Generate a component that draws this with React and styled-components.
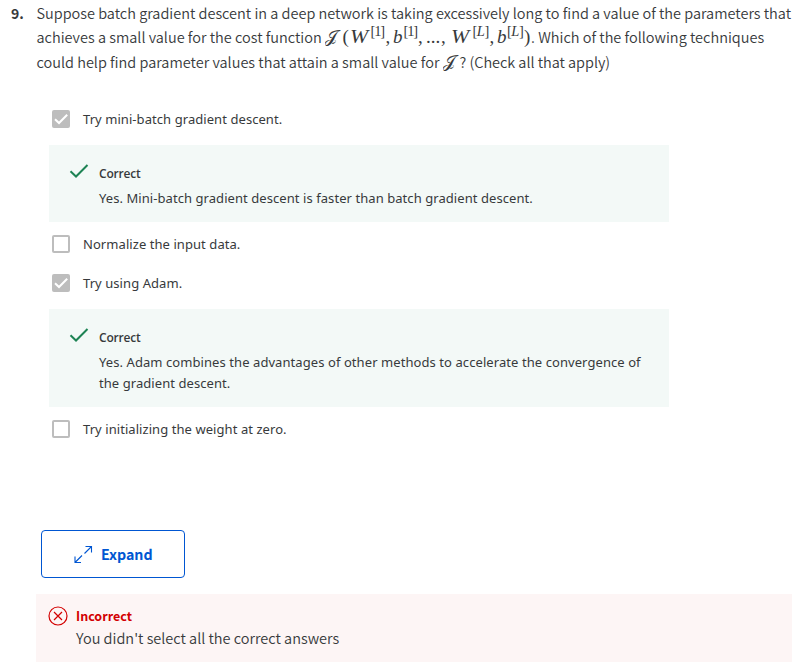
import React from 'react';
import styled, { createGlobalStyle } from 'styled-components';

const source = '"Noto Sans CJK SC", "Noto Sans", sans-serif';
const body = '"Noto Sans", "Open Sans", sans-serif';

const GlobalStyle = createGlobalStyle`
  * { box-sizing: border-box; }
  body { margin: 0; background: #fff; color: #373a3c; }
  p, ul { margin: 0; padding: 0; }
`;

const Page = styled.main`
  width: 799px;
  height: 666px;
  overflow: hidden;
  display: flex;
  flex-direction: column;
`;
const Question = styled.section`
  display: flex;
  padding: 1px 0 0 11px;
  height: 101px;
  font: 350 14.5px/24px ${source};
`;
const Number = styled.span`
  width: 25.5px;
  font-weight: 700;
  font-size: 14px;
`;
const Line = styled.p`
  display: flex;
  height: ${(p) => p.$h || 24}px;
  white-space: pre;
`;
const Words = styled.span`
  width: ${(p) => p.$w}px;
  letter-spacing: ${(p) => p.$ls || 0}px;
`;
const Formula = styled.span`
  display: flex;
  width: ${(p) => p.$w}px;
  font: 400 19px/24px "Liberation Serif", serif;
`;
const Sym = styled.span`
  flex: none;
  width: ${(p) => p.$w}px;
  font-style: ${(p) => (p.$it ? 'italic' : 'normal')};
`;
const WideSym = styled(Sym)`
  transform: scaleX(1.15);
  transform-origin: left;
`;
const Script = styled.span`
  width: ${(p) => p.$w}px;
  flex: none;
  font-size: 16px;
  transform: scaleX(1.15);
  transform-origin: left;
`;
const Sup = styled.span`
  display: flex;
  flex: none;
  width: ${(p) => p.$w}px;
  padding-left: 1px;
  font-size: 14.5px;
  line-height: 12px;
  letter-spacing: ${(p) => p.$ls || 0}px;
`;
const Choices = styled.section`
  width: 620px;
  margin-left: 49px;
  height: 429px;
  font: 400 13px/21px ${body};
`;
const Choice = styled.label`
  display: flex;
  align-items: center;
  height: 36px;
  padding-left: 3px;
  gap: 13px;
  margin-bottom: ${(p) => p.$mb}px;
`;
const Box = styled.span`
  width: 18px;
  height: 18px;
  border: 2px solid #bdbdbd;
  border-radius: 2px;
  background: ${(p) => (p.$on ? '#bdbdbd' : '#fff')};
  display: flex;
  svg { margin: -2px; flex: none; }
`;
const Feedback = styled.div`
  display: flex;
  height: ${(p) => p.$h}px;
  margin-bottom: ${(p) => p.$mb}px;
  padding: 18px 0 0 20px;
  background: #f3f9f7;
  svg { flex: none; margin: -1px 10px 0 0; }
`;
const Verdict = styled.p`
  font: 600 12px/22px "Open Sans", sans-serif;
  letter-spacing: -0.2px;
  margin-bottom: 3px;
`;
const Text = styled.p`
  white-space: nowrap;
  letter-spacing: ${(p) => p.$ls ?? 0.065}px;
`;
const Expand = styled.button`
  display: flex;
  align-items: center;
  width: 144px;
  height: 48px;
  margin: 0 0 16px 41px;
  padding: 0 0 0 32px;
  gap: 8px;
  border: 1px solid #0056d2;
  border-radius: 4px;
  background: #fff;
  color: #0056d2;
  font: 700 14.2px/24px ${source};
`;
const Alert = styled.div`
  display: flex;
  flex: none;
  width: 756px;
  height: 68px;
  margin-left: 36px;
  padding: 11px 0 0 12px;
  background: #fdf5f5;
  gap: 8px;
  font: 350 14.5px/22px ${source};
  svg { flex: none; margin-top: 1px; }
`;
const AlertTitle = styled.p`
  color: #d30001;
  font-weight: 700;
  font-size: 12.5px;
`;

const Tick = () => (
  <svg width="18" height="18" viewBox="0 0 18 18" fill="none">
    <path d="M3 9.2 7 13 15.2 4.7" stroke="#fff" strokeWidth="2" />
  </svg>
);
const Correct = () => (
  <svg width="20" height="18" viewBox="0 0 20 18" fill="none">
    <path d="M1.5 9.3 7 14.5 18.5 3" stroke="#1d8354" strokeWidth="2" />
  </svg>
);
const Option = ({ on, mb, children }) => (
  <Choice $mb={mb}>
    <Box $on={on}>{on && <Tick />}</Box>
    <Text>{children}</Text>
  </Choice>
);

export default function App() {
  return (
    <>
      <GlobalStyle />
      <Page>
        <Question>
          <Number>9.</Number>
          <div>
            <Line><Words $ls={-0.008}>Suppose batch gradient descent in a deep network is taking excessively long to find a value of the parameters that</Words></Line>
            <Line $h={25}>
              <Words $w={288.5}>achieves a small value for the cost function</Words>
              <Formula $w={206}>
                <Script $w={17.5}>𝒥</Script><Sym $w={7}>(</Sym>
                <WideSym $w={20} $it>W</WideSym><Sup $w={16} $ls={-1.2}>[1]</Sup><Sym $w={7.5}>,</Sym>
                <Sym $w={9.5} $it>b</Sym><Sup $w={15.5} $ls={-1.2}>[1]</Sup><Sym $w={8}>,</Sym>
                <Sym $w={15}>...</Sym><Sym $w={10}>,</Sym>
                <WideSym $w={20.5} $it>W</WideSym><Sup $w={18} $ls={-0.5}>[<i>L</i>]</Sup><Sym $w={7.5}>,</Sym>
                <Sym $w={9} $it>b</Sym><Sup $w={18} $ls={-0.5}>[<i>L</i>]</Sup><Sym $w={7}>)</Sym>
              </Formula>
              <Words>. Which of the following techniques</Words>
            </Line>
            <Line>
              <Words $w={406}>could help find parameter values that attain a small value for</Words>
              <Formula $w={17}><Script $w={17}>𝒥</Script></Formula>
              <Words $ls={-0.03}>? (Check all that apply)</Words>
            </Line>
          </div>
        </Question>
        <Choices>
          <Option on mb={8}>Try mini-batch gradient descent.</Option>
          <Feedback $h={77} $mb={4}>
            <Correct />
            <div>
              <Verdict>Correct</Verdict>
              <Text>Yes. Mini-batch gradient descent is faster than batch gradient descent.</Text>
            </div>
          </Feedback>
          <Option mb={3}>Normalize the input data.</Option>
          <Option on mb={8}>Try using Adam.</Option>
          <Feedback $h={98} $mb={4}>
            <Correct />
            <div>
              <Verdict>Correct</Verdict>
              <Text $ls={0.075}>Yes. Adam combines the advantages of other methods to accelerate the convergence of</Text>
              <Text>the gradient descent.</Text>
            </div>
          </Feedback>
          <Option mb={0}>Try initializing the weight at zero.</Option>
        </Choices>
        <Expand>
          <svg width="19" height="19" viewBox="0 0 19 19" fill="none" stroke="#0056d2" strokeWidth="1.1">
            <path d="M11.5 1.5h6V7.5M17.5 1.5 10.5 8.5M7 17.5H1V11.5M1 17.5l7-7" />
          </svg>
          Expand
        </Expand>
        <Alert>
          <svg width="20" height="20" viewBox="0 0 20 20" fill="none" stroke="#d30001" strokeWidth="1.2">
            <circle cx="10" cy="10" r="9" />
            <path d="m6 6 8 8m0-8-8 8" />
          </svg>
          <div>
            <AlertTitle>Incorrect</AlertTitle>
            <Text $ls={0}>You didn't select all the correct answers</Text>
          </div>
        </Alert>
      </Page>
    </>
  );
}
